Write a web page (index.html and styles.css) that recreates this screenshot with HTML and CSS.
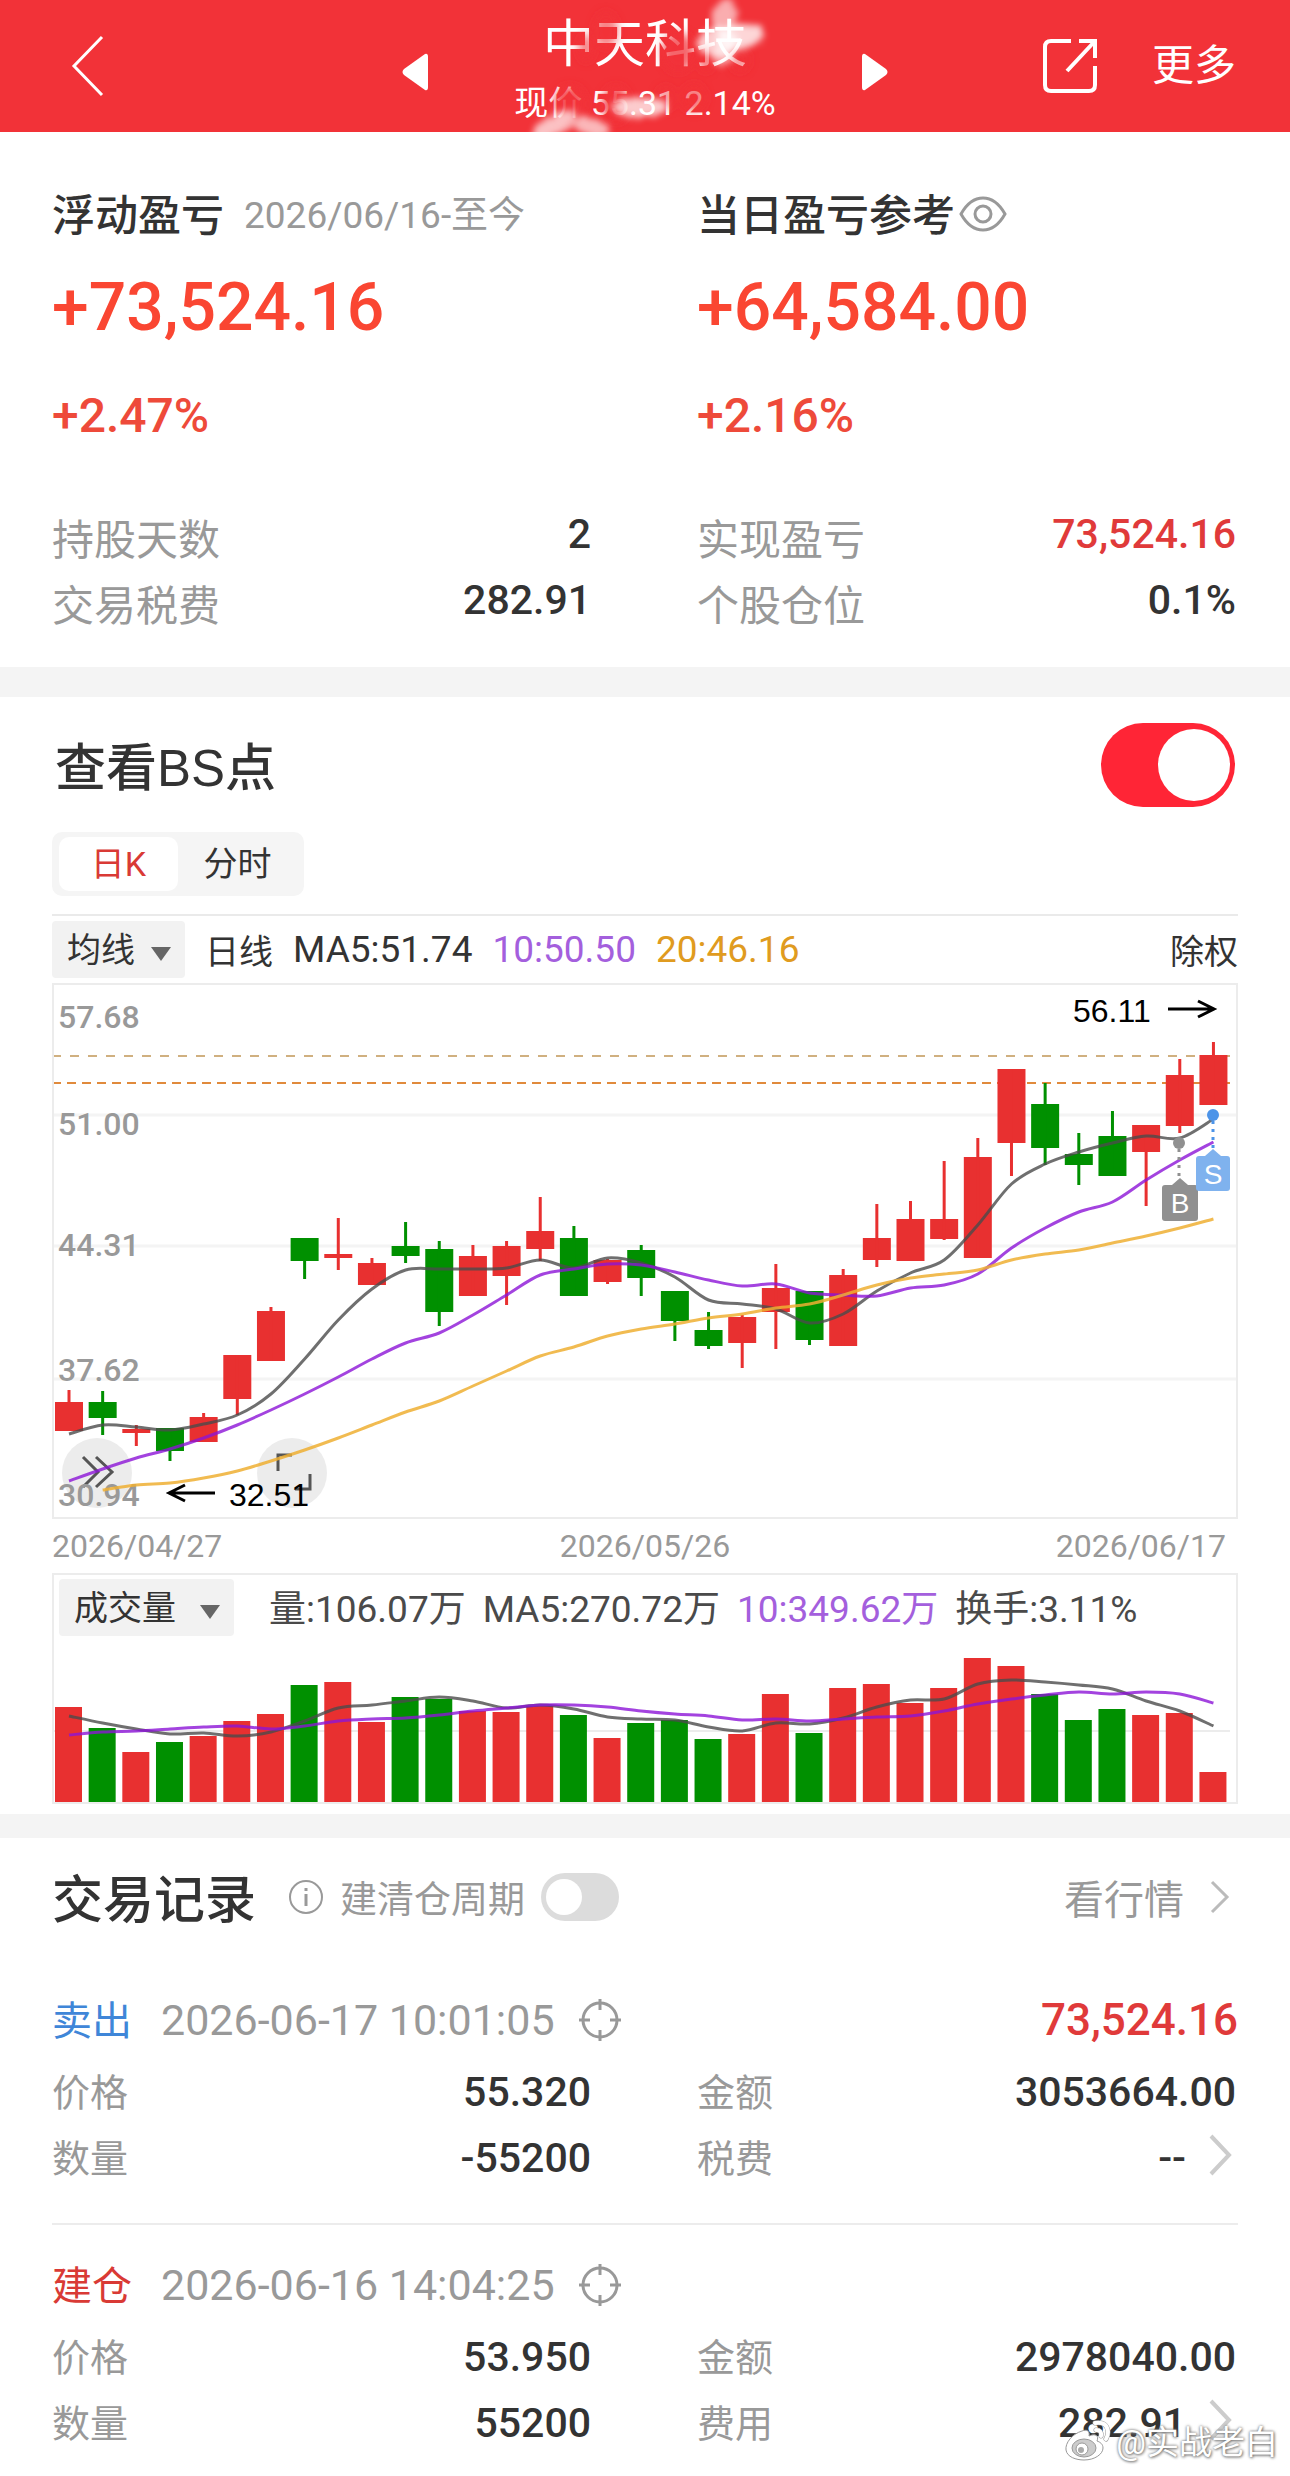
FILE: index.html
```html
<!DOCTYPE html>
<html lang="zh-CN">
<head>
    <meta charset="UTF-8">
    <meta name="viewport" content="width=device-width, initial-scale=1.0">
    <title>中天科技</title>
    <link rel="stylesheet" href="styles.css">
</head>
<body>
    <header class="topbar">
        <button class="icon-btn back" aria-label="返回">
            <svg width="34" height="62" viewBox="0 0 34 62"><path d="M32 2 L4 31 L32 60" fill="none" stroke="#fff" stroke-width="3"/></svg>
        </button>
        <div class="stock">
            <button class="icon-btn" aria-label="上一只">
                <svg width="28" height="38" viewBox="0 0 28 38"><path d="M24 1 L3 16 Q0 19 3 22 L24 37 Q27 38 27 34 V4 Q27 0 24 1Z" fill="#fff"/></svg>
            </button>
            <div class="stock-name">
                <h1>中天科技</h1>
                <p>现价 55.31 2.14%</p>
                <svg class="smudge" viewBox="0 0 320 145">
                    <defs>
                        <filter id="soft" x="-50%" y="-50%" width="200%" height="200%"><feGaussianBlur stdDeviation="4"/></filter>
                        <filter id="rough" x="-20%" y="-20%" width="140%" height="140%">
                            <feTurbulence type="fractalNoise" baseFrequency=".2" numOctaves="2" seed="4"/>
                            <feDisplacementMap in="SourceGraphic" scale="12" xChannelSelector="R" yChannelSelector="G"/>
                            <feGaussianBlur stdDeviation="3"/>
                        </filter>
                    </defs>
                    <g fill="#f23238" filter="url(#soft)">
                        <ellipse cx="86" cy="48" rx="8" ry="14" opacity=".6"/>
                        <ellipse cx="106" cy="30" rx="12" ry="18" opacity=".6"/>
                        <ellipse cx="178" cy="52" rx="16" ry="20" opacity=".75"/>
                        <ellipse cx="206" cy="58" rx="8" ry="14" opacity=".65"/>
                        <ellipse cx="240" cy="60" rx="10" ry="12" opacity=".5"/>
                        <ellipse cx="70" cy="104" rx="16" ry="18" opacity=".85"/>
                        <ellipse cx="116" cy="104" rx="14" ry="18" opacity=".85"/>
                        <ellipse cx="166" cy="98" rx="10" ry="12" opacity=".5"/>
                        <ellipse cx="194" cy="98" rx="12" ry="14" opacity=".65"/>
                    </g>
                    <g fill="#fff" filter="url(#rough)">
                        <ellipse cx="224" cy="16" rx="12" ry="18" opacity=".6" transform="rotate(18 224 16)"/>
                        <ellipse cx="218" cy="42" rx="20" ry="15" opacity=".75"/>
                        <ellipse cx="240" cy="37" rx="24" ry="13" opacity=".8" transform="rotate(-10 240 37)"/>
                        <ellipse cx="222" cy="56" rx="10" ry="10" opacity=".5"/>
                        <ellipse cx="140" cy="107" rx="27" ry="11" opacity=".75"/>
                        <ellipse cx="54" cy="125" rx="25" ry="10" opacity=".7" transform="rotate(-28 54 125)"/>
                        <ellipse cx="92" cy="127" rx="18" ry="9" opacity=".65" transform="rotate(15 92 127)"/>
                    </g>
                </svg>
            </div>
            <button class="icon-btn" aria-label="下一只">
                <svg width="28" height="38" viewBox="0 0 28 38"><path d="M4 1 L25 16 Q28 19 25 22 L4 37 Q1 38 1 34 V4 Q1 0 4 1Z" fill="#fff"/></svg>
            </button>
        </div>
        <div class="actions">
            <button class="icon-btn" aria-label="分享">
                <svg width="56" height="56" viewBox="0 0 56 56" fill="none" stroke="#fff" stroke-width="4"><path d="M29 3 H9 Q3 3 3 9 V47 Q3 53 9 53 H47 Q53 53 53 47 V28"/><path d="M37 3 H53 V20 M53 3 L25 33"/></svg>
            </button>
            <button class="more">更多</button>
        </div>
    </header>

    <main>
        <section class="summary two-col">
            <div>
                <div class="sum-title"><h2>浮动盈亏</h2><span class="period">2026/06/16-至今</span></div>
                <p class="big">+73,524.16</p>
                <p class="pct">+2.47%</p>
                <dl>
                    <div><dt>持股天数</dt><dd>2</dd></div>
                    <div><dt>交易税费</dt><dd>282.91</dd></div>
                </dl>
            </div>
            <div>
                <div class="sum-title">
                    <h2>当日盈亏参考</h2>
                    <button class="icon-btn eye" aria-label="显示金额">
                        <svg width="48" height="36" viewBox="0 0 48 36" fill="none" stroke="#999" stroke-width="3"><path d="M2 18 Q11 2 24 2 T46 18 Q37 34 24 34 T2 18Z"/><circle cx="24" cy="18" r="8"/></svg>
                    </button>
                </div>
                <p class="big">+64,584.00</p>
                <p class="pct">+2.16%</p>
                <dl>
                    <div><dt>实现盈亏</dt><dd class="up">73,524.16</dd></div>
                    <div><dt>个股仓位</dt><dd>0.1%</dd></div>
                </dl>
            </div>
        </section>

        <section class="chart">
            <div class="chart-head">
                <label for="bs">查看BS点</label>
                <input class="switch" id="bs" type="checkbox" checked>
            </div>
            <div class="tabs">
                <button class="active">日K</button>
                <button>分时</button>
            </div>
            <div class="ma-bar">
                <span class="picker"><select aria-label="主图指标"><option>均线</option></select></span>
                <span class="period-name">日线</span>
                <span>MA5:51.74</span>
                <span class="ma10">10:50.50</span>
                <span class="ma20">20:46.16</span>
                <span class="adjust">除权</span>
            </div>
            <svg class="kline" viewBox="0 0 1186 536">
                <g stroke="#f4f4f4" stroke-width="3">
                    <path d="M0 132 H1186 M0 263 H1186 M0 396 H1186"/>
                </g>
                <circle cx="45" cy="490" r="35" fill="#ececec"/>
                <circle cx="240" cy="490" r="35" fill="#ececec"/>
                <g fill="none" stroke="#555" stroke-width="3">
                    <path d="M31 474 L46 489 L31 504 M44 474 L60 489 L44 504"/>
                    <path d="M226 488 V472 H240 M258 491 V506 H243"/>
                </g>
                <path d="M0 73 H1178" stroke="#d0b080" stroke-width="2" stroke-dasharray="9 9"/>
                <path d="M0 100 H1178" stroke="#e08a3c" stroke-width="2" stroke-dasharray="9 6"/>
                <g class="axis-y">
                    <text x="6" y="45">57.68</text>
                    <text x="6" y="152">51.00</text>
                    <text x="6" y="273">44.31</text>
                    <text x="6" y="398">37.62</text>
                    <text x="6" y="523">30.94</text>
                </g>
                <g id="candles"></g>
                <g id="price-lines"></g>
                <g class="mark">
                    <text x="1021" y="39">56.11</text>
                    <path d="M1116 26 H1162 M1146 18 L1162 26 L1146 34"/>
                    <text x="177" y="523">32.51</text>
                    <path d="M163 510 H117 M133 502 L117 510 L133 518"/>
                </g>
                <g class="point">
                    <path d="M1127 166 V196" stroke="#909090" stroke-width="3" stroke-dasharray="3 5"/>
                    <circle cx="1127" cy="160" r="6" fill="#909090"/>
                    <path d="M1120 202 L1128 195 L1136 202Z" fill="#909090"/>
                    <rect x="1110" y="202" width="36" height="36" rx="3" fill="#909090"/>
                    <text x="1128" y="230">B</text>
                    <path d="M1161 138 V168" stroke="#4d94e8" stroke-width="3" stroke-dasharray="3 5"/>
                    <circle cx="1161" cy="132" r="6" fill="#4d94e8"/>
                    <path d="M1153 173 L1161 166 L1169 173Z" fill="#7fb2ee"/>
                    <rect x="1144" y="173" width="34" height="35" rx="3" fill="#7fb2ee"/>
                    <text x="1161" y="201">S</text>
                </g>
            </svg>
            <div class="dates">
                <span>2026/04/27</span><span>2026/05/26</span><span>2026/06/17</span>
            </div>
            <div class="volume">
                <div class="vol-bar">
                    <span class="picker"><select aria-label="副图指标"><option>成交量</option></select></span>
                    <span>量:106.07万</span>
                    <span>MA5:270.72万</span>
                    <span class="ma10">10:349.62万</span>
                    <span>换手:3.11%</span>
                </div>
                <svg viewBox="0 0 1186 164">
                    <path d="M0 91 H1178" stroke="#ececec" stroke-width="2"/>
                    <g id="bars"></g>
                    <g id="volume-lines"></g>
                </svg>
            </div>
        </section>

        <section class="records">
            <div class="rec-title">
                <h2>交易记录</h2>
                <svg width="36" height="36" viewBox="0 0 36 36" fill="none" stroke="#999" stroke-width="2"><circle cx="18" cy="18" r="16"/><path d="M18 15 V27 M18 9 V12" stroke-width="3"/></svg>
                <label for="cycle">建清仓周期</label>
                <input class="switch small" id="cycle" type="checkbox">
                <a href="#">看行情
                    <svg width="20" height="34" viewBox="0 0 20 34"><path d="M2 2 L17 17 L2 32" fill="none" stroke="#bbb" stroke-width="3"/></svg>
                </a>
            </div>

            <article class="record">
                <div class="rec-head">
                    <span class="side sell">卖出</span>
                    <time>2026-06-17 10:01:05</time>
                    <svg width="42" height="42" viewBox="0 0 42 42" fill="none" stroke="#999" stroke-width="3"><circle cx="21" cy="21" r="17"/><path d="M21 0 V11 M21 31 V42 M0 21 H11 M31 21 H42"/></svg>
                    <strong>73,524.16</strong>
                </div>
                <dl class="two-col">
                    <div><dt>价格</dt><dd>55.320</dd></div>
                    <div><dt>金额</dt><dd>3053664.00</dd></div>
                    <div><dt>数量</dt><dd>-55200</dd></div>
                    <div><dt>税费</dt><dd>--</dd>
                        <svg width="24" height="42" viewBox="0 0 24 42"><path d="M3 2 L21 21 L3 40" fill="none" stroke="#ccc" stroke-width="4"/></svg>
                    </div>
                </dl>
            </article>

            <article class="record">
                <div class="rec-head">
                    <span class="side buy">建仓</span>
                    <time>2026-06-16 14:04:25</time>
                    <svg width="42" height="42" viewBox="0 0 42 42" fill="none" stroke="#999" stroke-width="3"><circle cx="21" cy="21" r="17"/><path d="M21 0 V11 M21 31 V42 M0 21 H11 M31 21 H42"/></svg>
                </div>
                <dl class="two-col">
                    <div><dt>价格</dt><dd>53.950</dd></div>
                    <div><dt>金额</dt><dd>2978040.00</dd></div>
                    <div><dt>数量</dt><dd>55200</dd></div>
                    <div><dt>费用</dt><dd>282.91</dd>
                        <svg width="24" height="42" viewBox="0 0 24 42"><path d="M3 2 L21 21 L3 40" fill="none" stroke="#ccc" stroke-width="4"/></svg>
                    </div>
                </dl>
            </article>

            <div class="watermark">
                <svg width="48" height="42" viewBox="0 0 48 42">
                    <path d="M18 12 C8 15 1 24 2 31 C3 38 12 41 20 41 C31 41 39 35 39 29 C39 25 36 23 33 22 C35 17 32 14 25 17 C26 12 23 10 18 12Z" fill="#fff" stroke="#999" stroke-width="1"/>
                    <ellipse cx="20" cy="29" rx="12" ry="9" fill="#ccc" stroke="#999"/>
                    <circle cx="18" cy="30" r="6" fill="#fff" stroke="#999"/>
                    <circle cx="17" cy="31" r="3" fill="#aaa"/>
                    <path d="M31 4 Q43 2 44 13 Q44 17 42 20 M32 11 Q38 11 37 17" fill="none" stroke="#999" stroke-width="5" stroke-linecap="round"/>
                    <path d="M31 4 Q43 2 44 13 Q44 17 42 20 M32 11 Q38 11 37 17" fill="none" stroke="#fff" stroke-width="4" stroke-linecap="round"/>
                </svg>
                <span>@实战老白</span>
            </div>
        </section>
    </main>

    <script src="chart.js"></script>
</body>
</html>
```
FILE: styles.css
```css
* { box-sizing: border-box; margin: 0; padding: 0; }
body { background: #fff; color: #333; font-family: Roboto, "Noto Sans CJK SC", sans-serif; }
button, select { font: inherit; color: inherit; border: none; background: none; }
svg { display: block; }
.icon-btn { display: block; flex: none; }

/* header */
.topbar { display: grid; grid-template-columns: 1fr auto 1fr; align-items: center; height: 132px; padding: 0 54px; background: #f23238; color: #fff; }
.back { justify-self: start; margin-left: 16px; }
.stock { display: flex; align-items: center; justify-content: space-between; width: 488px; padding-top: 12px; }
.stock-name { position: relative; text-align: center; }
.stock-name h1 { font-size: 51px; line-height: 62px; font-weight: 400; }
.stock-name p { font-size: 34px; line-height: 54px; white-space: nowrap; }
.smudge { position: absolute; left: 50%; top: -14px; width: 320px; height: 145px; margin-left: -145px; }
.actions { display: flex; justify-content: flex-end; align-items: center; gap: 54px; }
.more { font-size: 42px; line-height: 60px; }

/* summary */
.two-col { display: grid; grid-template-columns: 1fr 1fr; column-gap: 106px; padding-right: 2px; }
.summary { padding: 52px 54px 29px 52px; border-bottom: 30px solid #f4f4f4; }
.sum-title { display: flex; align-items: center; height: 60px; }
.sum-title h2 { padding-bottom: 4px; font-size: 43px; font-weight: 500; }
.period { margin-left: 20px; padding-bottom: 4px; font-size: 37px; color: #999; }
.eye { margin-left: 4px; }
.big { margin-top: 15px; font-size: 66px; line-height: 98px; font-weight: 500; color: #fa4632; }
.pct { margin-top: 29px; font-size: 48px; line-height: 60px; font-weight: 500; color: #ee4a3a; }
.summary dl { margin-top: 60px; }
dl div { display: flex; align-items: center; height: 66px; }
dt { font-size: 38px; color: #999; }
dd { margin-left: auto; padding-top: 6px; font-size: 41px; font-weight: 500; }
.summary dt { padding-bottom: 5px; font-size: 42px; }
.summary dd { padding: 0 0 10px; }
.up { color: #e03a3a; }

/* chart */
.chart { padding: 26px 52px 10px; border-bottom: 24px solid #f4f4f4; }
.chart-head { display: flex; align-items: center; justify-content: space-between; height: 84px; padding: 0 3px; }
.chart-head label { padding-bottom: 3px; font-family: "Liberation Sans", "Noto Sans CJK SC", sans-serif; font-size: 51px; font-weight: 500; }
.switch { appearance: none; flex: none; display: flex; align-items: center; justify-content: flex-end; width: 134px; height: 84px; padding: 0 5px; border-radius: 42px; background: #ff2536; }
.switch::before { content: ""; width: 72px; height: 72px; border-radius: 50%; background: #fff; }
.switch.small { justify-content: flex-start; width: 78px; height: 48px; border-radius: 24px; background: #dcdcdc; }
.switch.small::before { width: 36px; height: 36px; }
.tabs { display: inline-flex; margin-top: 25px; padding: 5px 7px; border-radius: 10px; background: #f5f5f5; vertical-align: top; }
.tabs button { width: 119px; height: 54px; border-radius: 10px; font-size: 34px; line-height: 54px; }
.tabs .active { background: #fff; color: #d93a35; }
.ma-bar { display: flex; align-items: center; gap: 20px; margin-top: 18px; height: 69px; border-top: 2px solid #eaeaea; font-size: 37px; white-space: nowrap; }
.picker { position: relative; display: block; height: 57px; }
.picker select { appearance: none; height: 57px; padding: 0 50px 0 15px; border-radius: 4px; background: #f2f2f2; font-size: 34px; }
.picker::after { content: ""; position: absolute; right: 14px; top: 26px; border: 10px solid transparent; border-top: 14px solid #666; border-bottom: 0; }
.ma10 { color: #a45fdd; }
.ma20 { color: #e09b20; }
.period-name, .adjust { font-size: 34px; }
.adjust { margin-left: auto; }
.kline { width: 100%; height: auto; outline: 2px solid #ececec; outline-offset: -2px; }
.axis-y text { font-size: 32px; font-weight: 500; fill: #999; }
.mark text { font-family: "Liberation Sans", sans-serif; font-size: 32px; }
.mark path { fill: none; stroke: #000; stroke-width: 3; }
.point text { font-family: "Liberation Sans", sans-serif; font-size: 28px; fill: #fff; text-anchor: middle; }
.dates { display: grid; grid-template-columns: 1fr auto 1fr; align-items: center; height: 54px; font-size: 32px; color: #999; }
.dates span:last-child { justify-self: end; padding-right: 12px; }
.volume { outline: 2px solid #ececec; outline-offset: -2px; }
.vol-bar { display: flex; align-items: center; gap: 17px; height: 67px; padding: 2px 0 0 7px; font-size: 37px; color: #4a4a4a; white-space: nowrap; }
.vol-bar > span { padding-bottom: 3px; }
.vol-bar .picker { margin-right: 18px; padding: 0; color: #333; }
.vol-bar select { width: 175px; }
.volume svg { width: 100%; height: auto; }

/* records */
.records { position: relative; padding: 23px 52px 17px; }
.rec-title { display: flex; align-items: center; height: 72px; color: #999; }
.rec-title h2 { padding-bottom: 2px; font-size: 51px; font-weight: 500; color: #333; }
.rec-title > svg { margin-left: 32px; }
.rec-title label { margin: 0 16px; font-size: 37px; }
.rec-title a { display: flex; align-items: center; gap: 26px; margin-left: auto; padding-right: 8px; font-size: 40px; color: #999; text-decoration: none; }
.record { padding: 51px 0 35px; }
.record + .record { padding: 24px 0 0; border-top: 2px solid #ececec; }
.rec-head { display: flex; align-items: center; height: 72px; }
.side { padding-bottom: 4px; font-size: 40px; }
.sell { color: #3f86d8; }
.buy { color: #d93a35; }
.rec-head time { margin: 0 24px 0 29px; font-size: 43px; color: #999; }
.rec-head strong { margin-left: auto; font-size: 44px; font-weight: 500; color: #e03a3a; }
.record dl svg { margin: 0 4px 0 22px; }
.watermark { position: absolute; right: 12px; bottom: 6px; display: flex; align-items: center; gap: 4px; font-size: 33px; color: #fff; text-shadow: 0 0 3px #666, 1px 1px 3px #888; }
```
FILE: chart.js
```javascript
const RED = '#e83030';
const GREEN = '#009000';
const STEP = 33.66;
const START = 17;

// [high, top, bottom, low]
const candles = [
    [407, 419, 448, 448], [408, 419, 435, 452], [442, 446, 450, 463], [445, 445, 468, 478],
    [430, 434, 459, 459], [372, 372, 416, 432], [324, 328, 378, 378], [255, 255, 278, 296],
    [235, 271, 275, 287], [275, 280, 302, 302], [239, 263, 273, 280], [258, 266, 329, 343],
    [262, 273, 313, 313], [258, 263, 293, 322], [214, 248, 266, 278], [243, 255, 313, 313],
    [276, 277, 299, 301], [262, 267, 295, 313], [308, 308, 338, 358], [329, 347, 363, 366],
    [332, 334, 360, 385], [281, 305, 329, 366], [308, 308, 357, 362], [286, 292, 363, 363],
    [221, 255, 277, 284], [218, 236, 278, 278], [178, 236, 256, 257], [155, 174, 275, 275],
    [86, 86, 160, 193], [100, 121, 165, 182], [150, 171, 182, 202], [128, 153, 193, 193],
    [142, 142, 169, 223], [76, 92, 143, 150], [59, 72, 122, 122]
];
const colors = 'rgrgrrrgrrggrrrgrgggrrgrrrrrrgggrrr';
const volumes = [95, 74, 50, 60, 66, 81, 88, 117, 120, 80, 105, 103, 91, 90, 96, 87, 64, 79, 82, 63, 68, 108, 69, 114, 118, 99, 114, 144, 136, 108, 82, 93, 87, 89, 30];

const ma5 = [451, 442, 444, 447, 441, 432, 411, 376, 337, 306, 287, 286, 286, 285, 277, 285, 275, 280, 294, 317, 321, 326, 340, 331, 308, 290, 277, 242, 201, 181, 169, 160, 153, 155, 136];
const ma10 = [498, 486, 475, 466, 455, 442, 427, 411, 394, 376, 360, 350, 332, 312, 292, 286, 281, 282, 289, 297, 303, 301, 310, 312, 313, 305, 302, 291, 265, 245, 229, 219, 197, 177, 159];
const ma20 = [507, 502, 500, 495, 488, 478, 467, 455, 442, 429, 418, 403, 388, 373, 364, 353, 346, 341, 335, 331, 325, 321, 312, 302, 295, 291, 287, 277, 271, 267, 260, 253, 245, 236];
const vol5 = [76, 83, 89, 94, 93, 96, 92, 81, 68, 65, 61, 57, 61, 68, 65, 69, 77, 79, 80, 87, 91, 83, 84, 78, 67, 60, 59, 44, 40, 42, 45, 49, 61, 71, 86];
const vol10 = [95, 92, 91, 89, 87, 86, 89, 86, 81, 79, 78, 75, 71, 68, 65, 65, 67, 71, 74, 76, 80, 79, 81, 79, 77, 76, 71, 64, 59, 55, 52, 54, 52, 54, 63];

function center(i) {
    return START + i * STEP;
}

function smoothLine(values, color, from) {
    const pts = values.map((y, i) => [center(i + from), y]);
    let d = `M${pts[0][0]} ${pts[0][1]}`;
    for (let i = 0; i < pts.length - 1; i++) {
        const a = pts[i - 1] || pts[i];
        const b = pts[i];
        const c = pts[i + 1];
        const e = pts[i + 2] || c;
        d += ` C${b[0] + (c[0] - a[0]) / 6} ${b[1] + (c[1] - a[1]) / 6} ${c[0] - (e[0] - b[0]) / 6} ${c[1] - (e[1] - b[1]) / 6} ${c[0]} ${c[1]}`;
    }
    return `<path d="${d}" fill="none" stroke="${color}" stroke-width="3"/>`;
}

let candleHtml = '';
let barHtml = '';
candles.forEach(([high, top, bottom, low], i) => {
    const fill = colors[i] === 'r' ? RED : GREEN;
    const x = center(i);
    candleHtml += `<rect x="${x - 14}" y="${top}" width="28" height="${bottom - top}" fill="${fill}"/>`;
    candleHtml += `<rect x="${x - 1.5}" y="${high}" width="3" height="${low - high}" fill="${fill}"/>`;
    barHtml += `<rect x="${x - 14}" y="${162 - volumes[i]}" width="27" height="${volumes[i]}" fill="${fill}"/>`;
});
document.getElementById('candles').innerHTML = candleHtml;
document.getElementById('bars').innerHTML = barHtml;

document.getElementById('price-lines').innerHTML =
    smoothLine(ma5, 'rgba(75,75,75,.8)', 0) +
    smoothLine(ma10, 'rgba(140,20,215,.8)', 0) +
    smoothLine(ma20, 'rgba(238,175,50,.85)', 1);
document.getElementById('volume-lines').innerHTML =
    smoothLine(vol5, 'rgba(75,75,75,.8)', 0) +
    smoothLine(vol10, 'rgba(140,20,215,.8)', 0);
```
